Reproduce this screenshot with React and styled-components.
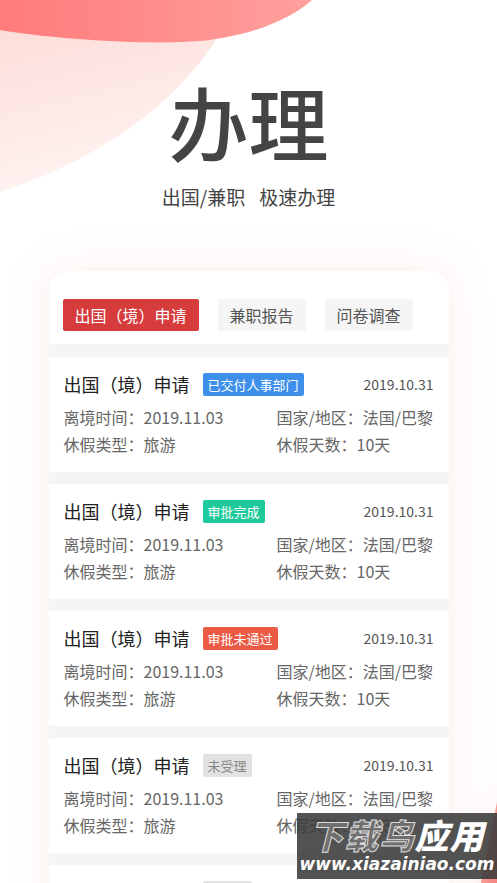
import styled, { createGlobalStyle } from "styled-components";

const GlobalStyle = createGlobalStyle`
  html, body {
    margin: 0;
    padding: 0;
    background: #fff;
  }
  body {
    font-family: "Noto Sans CJK SC", "Noto Sans", sans-serif;
  }
`;

const records = [
  { status: "已交付人事部门", tone: "blue" },
  { status: "审批完成", tone: "green" },
  { status: "审批未通过", tone: "red" },
  { status: "未受理", tone: "gray" },
  { status: "未受理", tone: "gray" },
];

const tones = {
  blue: { bg: "#3e8fea", color: "#fff" },
  green: { bg: "#1ec99b", color: "#fff" },
  red: { bg: "#ea5a45", color: "#fff" },
  gray: { bg: "#e2e2e2", color: "#888" },
};

function Decor() {
  return (
    <DecorSvg width="497" height="883" viewBox="0 0 497 883">
      <defs>
        <linearGradient id="light" x1="0" y1="0" x2="0.3" y2="1">
          <stop offset="0" stopColor="#fcd9d5" />
          <stop offset="1" stopColor="#fff4f2" />
        </linearGradient>
        <linearGradient id="dark" x1="0" y1="0" x2="1" y2="0">
          <stop offset="0" stopColor="#ff7b7b" />
          <stop offset="1" stopColor="#ffa09d" />
        </linearGradient>
        <linearGradient id="corner" x1="0" y1="0" x2="1" y2="1">
          <stop offset="0" stopColor="#f9b8b2" />
          <stop offset="1" stopColor="#f4837d" />
        </linearGradient>
        <radialGradient id="glow" cx="0" cy="1" r="1">
          <stop offset="0" stopColor="#fbe1de" />
          <stop offset="1" stopColor="#fff" stopOpacity="0" />
        </radialGradient>
      </defs>
      <path d="M0 0 H236 C212 64 140 146 0 192 Z" fill="url(#light)" />
      <path d="M0 0 V30 C60 40 150 45 200 41 C250 36 290 20 312 0 Z" fill="url(#dark)" />
      <rect x="449" y="740" width="48" height="143" fill="url(#glow)" transform="translate(946 0) scale(-1 1)" />
      <path d="M497 802 L481 883 H497 Z" fill="url(#corner)" />
    </DecorSvg>
  );
}

function App() {
  return (
    <>
      <GlobalStyle />
      <Page>
        <Decor />
        <Content>
          <Hero>
            <Title>办理</Title>
            <Subtitle>
              出国/兼职<Gap />极速办理
            </Subtitle>
          </Hero>

          <Card>
            <Tabs>
              <Tab $active>出国（境）申请</Tab>
              <Tab>兼职报告</Tab>
              <Tab>问卷调查</Tab>
            </Tabs>

            {records.map((r, i) => (
              <Item key={i}>
                <ItemHead>
                  <ItemTitle>出国（境）申请</ItemTitle>
                  <Badge $tone={r.tone}>{r.status}</Badge>
                  <DateText>2019.10.31</DateText>
                </ItemHead>
                <InfoGrid>
                  <Info>离境时间：2019.11.03</Info>
                  <Info>国家/地区：法国/巴黎</Info>
                  <Info>休假类型：旅游</Info>
                  <Info>休假天数：10天</Info>
                </InfoGrid>
              </Item>
            ))}
          </Card>
        </Content>

        <Watermark>
          <WatermarkTitle>
            <span>下载鸟</span>
            <em>应用</em>
          </WatermarkTitle>
          <WatermarkUrl>www.xiazainiao.com</WatermarkUrl>
        </Watermark>
      </Page>
    </>
  );
}

const Page = styled.div`
  position: relative;
  width: 497px;
  height: 883px;
  overflow: hidden;
  background: #fff;
`;

const DecorSvg = styled.svg`
  position: absolute;
  top: 0;
  left: 0;
  z-index: 0;
`;

const Content = styled.div`
  position: relative;
  z-index: 1;
  display: flex;
  flex-direction: column;
  align-items: center;
`;

const Hero = styled.header`
  display: flex;
  flex-direction: column;
  align-items: center;
  padding-top: 80px;
`;

const Title = styled.h1`
  margin: 0;
  font-size: 80px;
  line-height: 80px;
  font-weight: 500;
  color: #444;
`;

const Subtitle = styled.p`
  margin: 23px 0 0;
  font-size: 19px;
  line-height: 28px;
  color: #444;
  display: flex;
  align-items: center;
`;

const Gap = styled.span`
  display: inline-block;
  width: 14px;
`;

const Card = styled.section`
  margin-top: 60px;
  width: 400px;
  background: #f5f5f5;
  border-radius: 20px 20px 0 0;
  box-shadow: 0 0 36px 8px rgba(245, 175, 165, 0.16);
  overflow: hidden;
`;

const Tabs = styled.div`
  display: flex;
  gap: 19px;
  padding: 28px 14px 13px;
  background: #fff;
  margin-bottom: 13px;
`;

const Tab = styled.button`
  height: 32px;
  padding: 0 12px;
  border: none;
  border-radius: 2px;
  font-family: inherit;
  font-size: 16px;
  line-height: 32px;
  background: ${(p) => (p.$active ? "#d63c3c" : "#f5f5f5")};
  color: ${(p) => (p.$active ? "#fff" : "#555")};
  cursor: pointer;
`;

const Item = styled.article`
  box-sizing: border-box;
  height: 115px;
  padding: 15px 15px 0;
  background: #fff;
  margin-bottom: 12px;
`;

const ItemHead = styled.div`
  display: flex;
  align-items: center;
  height: 24px;
`;

const ItemTitle = styled.h3`
  margin: 0;
  font-size: 18px;
  line-height: 24px;
  font-weight: 400;
  color: #222;
`;

const Badge = styled.span`
  margin-left: 13px;
  height: 23px;
  padding: 0 5px;
  border-radius: 2px;
  font-size: 13px;
  line-height: 23px;
  background: ${(p) => tones[p.$tone].bg};
  color: ${(p) => tones[p.$tone].color};
`;

const DateText = styled.span`
  margin-left: auto;
  font-size: 14px;
  color: #555;
`;

const InfoGrid = styled.div`
  display: grid;
  grid-template-columns: 213px 1fr;
  row-gap: 3px;
  margin-top: 9px;
`;

const Info = styled.div`
  font-size: 16px;
  line-height: 24px;
  color: #666;
  white-space: nowrap;
`;

const Watermark = styled.div`
  position: absolute;
  left: 297px;
  top: 813px;
  width: 200px;
  height: 66px;
  z-index: 2;
  background: rgba(58, 58, 58, 0.88);
  display: flex;
  flex-direction: column;
  align-items: center;
  justify-content: center;
  font-family: "DejaVu Sans", sans-serif;
`;

const WatermarkTitle = styled.div`
  font-family: "Noto Sans CJK SC", sans-serif;
  font-size: 34px;
  line-height: 36px;
  font-weight: 900;
  font-style: italic;
  letter-spacing: 1px;

  span {
    color: #6f6f6f;
    -webkit-text-stroke: 1px #ddd;
  }

  em {
    color: #fff;
    font-style: italic;
  }
`;

const WatermarkUrl = styled.div`
  font-size: 17px;
  line-height: 22px;
  font-weight: bold;
  font-style: italic;
  color: #fff;
`;

export default App;
